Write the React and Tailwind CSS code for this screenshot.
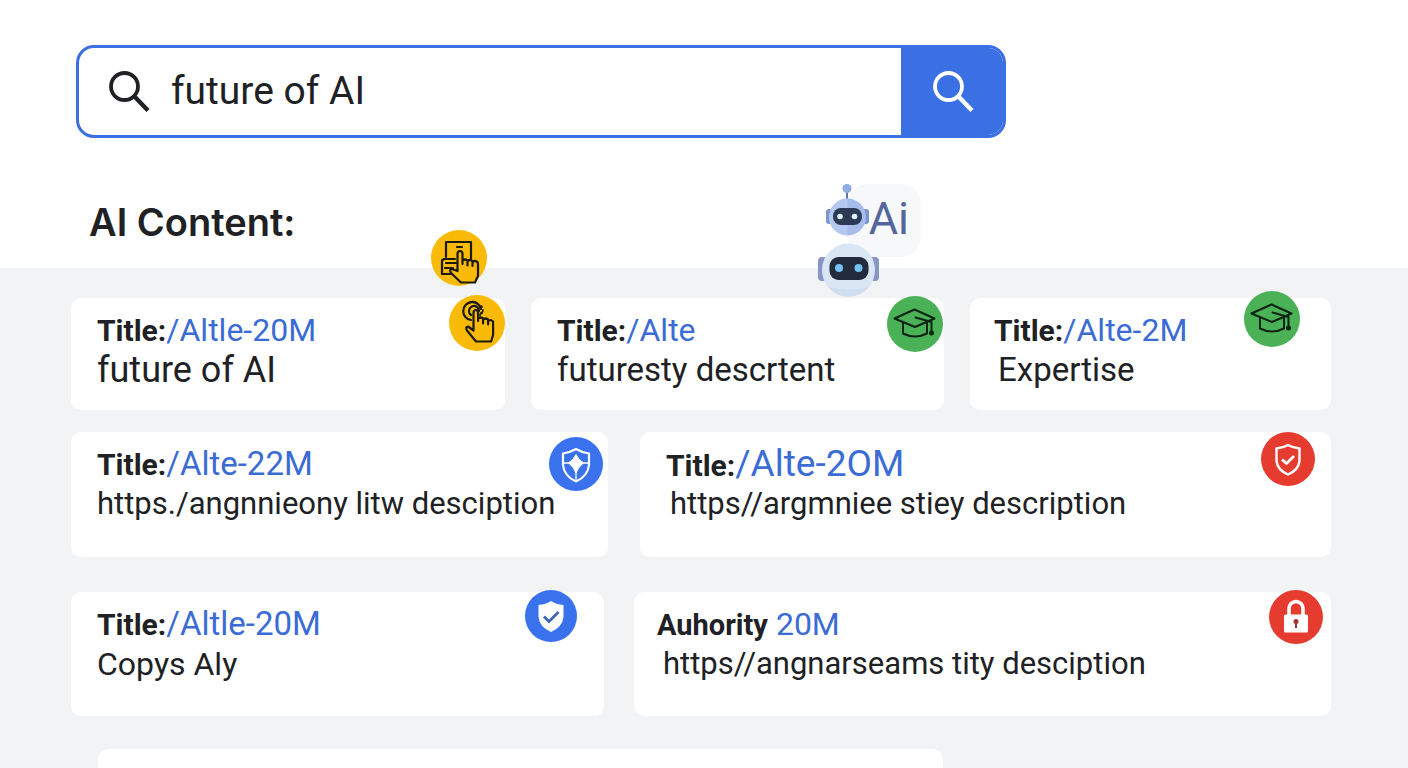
import { useState } from "react";

function SearchIcon({ className }) {
  return (
    <svg viewBox="0 0 42 42" className={className} fill="none" stroke="currentColor">
      <circle cx="15.5" cy="15.5" r="13.5" strokeWidth="3.800" />
      <path d="M25 25 39 39.5" strokeWidth="4.400" />
    </svg>
  );
}

function TabletTapIcon() {
  return (
    <svg viewBox="0 0 56 56" className="size-full" fill="none" stroke="#1c1a10" strokeWidth="2.200" strokeLinejoin="round" strokeLinecap="round">
      <path d="M15 27V12h25v17M26 17h5" />
      <path d="M24 29H13l-2 1.500V44H22M15 33h10M14 38h8" />
      <path
        d="M26.500 39V24q0-3 2.500-3t2.500 3v10V30.500q2.500-2 5 0v5V31q2.500-2 5 0v5V32q2.500-2 5 0L47 34V46l-3 6.500H30L20 43q-2-4 1-4l5.500 2z"
        fill="#f9ba08"
      />
    </svg>
  );
}

function TouchIcon() {
  return (
    <svg viewBox="0 0 56 56" className="size-full" fill="none" stroke="#1c1a10" strokeWidth="2.200" strokeLinejoin="round" strokeLinecap="round">
      <path d="M22 25a9 9 0 1 1 10-11M22 20a5 5 0 1 1 8-4" />
      <path d="M18 9q5-4 10-1M32 11l1 1M34 15l-1 3M31 20l1-2" strokeWidth="1.800" />
      <path
        d="M24.500 35V18q0-3 2.300-3t2.300 3v8V23.500q2.500-2 5 0v5V24.500q2.500-2 5 0v5V25.500q3-1 5 1V40l-2 6.500H27L18 35.500q-2-4 1-4l5.500 4z"
        fill="#f9ba08"
      />
    </svg>
  );
}

function CapIcon() {
  return (
    <svg viewBox="0 0 56 56" className="size-full" fill="none" stroke="#0b2413" strokeWidth="2" strokeLinejoin="round" strokeLinecap="round">
      <path d="M7.500 22.500 27.500 13.500 47.500 22.500 28 31z" />
      <path d="M16 27v10.500q12 6 24 0V27" />
      <path d="M28.500 21.500 44.500 26v10" />
      <circle cx="44.500" cy="37" r="1.500" fill="#0b2413" />
    </svg>
  );
}

function SparkShieldIcon() {
  return (
    <svg viewBox="0 0 54 54" className="size-full" fill="none" stroke="#fff" strokeWidth="2.200" strokeLinejoin="round">
      <path d="M27 12q-6 3.500-13 4.500V28q1 11 13 16.500Q39 39 40 28V16.500Q33 15.500 27 12z" />
      <path d="M14 26h26M27 34v10" strokeWidth="1.300" />
      <path d="M27 17.500q2 5 7.500 8.500Q29 30 27 36 25 30 19.500 26 25 22.500 27 17.500z" fill="#fff" strokeWidth="1" />
    </svg>
  );
}

function CheckShieldIcon() {
  return (
    <svg viewBox="0 0 54 54" className="size-full" fill="none" stroke="#fff" strokeWidth="2.400" strokeLinejoin="round">
      <path d="M27 13q-5 3-11.500 3.500V29q1 9 11.500 13.500Q37.500 38 38.500 29V16.500Q32 16 27 13z" />
      <path d="M21 27.500 25.500 31.500 33 24" strokeWidth="2.800" />
    </svg>
  );
}

function SolidShieldIcon() {
  return (
    <svg viewBox="0 0 52 52" className="size-full">
      <path d="M26 11q-5 3.500-12.500 4v12Q14.500 37 26 42q11.500-5 12.500-15V15Q31 14.500 26 11z" fill="#fff" />
      <path d="M19 26.500 24 31.500 33.500 22" fill="none" stroke="#3e66b8" strokeWidth="2.800" />
    </svg>
  );
}

function LockIcon() {
  return (
    <svg viewBox="0 0 54 54" className="size-full">
      <path d="M20 25v-6.500a7 7 0 0 1 14 0V25" fill="none" stroke="#fff" strokeWidth="3.600" />
      <rect x="15" y="24.500" width="24" height="18" rx="1.500" fill="#fff" />
      <circle cx="27" cy="31.500" r="2.500" fill="#a8322c" />
      <path d="M26 32h2v6h-2z" fill="#a8322c" />
    </svg>
  );
}

function Robots() {
  return (
    <svg viewBox="0 0 62 114" className="h-[114px] w-[62px]">
      <path d="M29 6v10" stroke="#5f74a6" strokeWidth="2" />
      <circle cx="29" cy="5.500" r="4.500" fill="#8fabe0" />
      <rect x="8" y="26" width="8" height="15" rx="3" fill="#7c95cf" />
      <rect x="43" y="26" width="8" height="15" rx="3" fill="#7c95cf" />
      <circle cx="29.500" cy="34" r="18.500" fill="#a6bdeb" />
      <path d="M29.500 15.500a18.500 18.500 0 0 0 0 37z" fill="#b5c9f0" />
      <rect x="15" y="25" width="29" height="17" rx="8" fill="#2c3a55" />
      <circle cx="22" cy="33.500" r="2.800" fill="#e3f1fd" />
      <circle cx="36.500" cy="33.500" r="2.800" fill="#e3f1fd" />
      <rect x="0" y="74" width="10" height="24" rx="4" fill="#8795c6" />
      <rect x="51" y="74" width="10" height="24" rx="4" fill="#8795c6" />
      <circle cx="30.500" cy="87" r="26.500" fill="#dbe6f5" />
      <path d="M10 104a26.500 26.500 0 0 0 41 0q-20 5-41 0z" fill="#d0deef" />
      <rect x="11.500" y="74" width="39" height="23" rx="9" fill="#222c3c" />
      <circle cx="21" cy="85" r="4" fill="#74c2ef" />
      <circle cx="40.500" cy="85" r="4" fill="#74c2ef" />
    </svg>
  );
}

function Badge({ className, children }) {
  return <span className={`absolute block rounded-full ${className}`}>{children}</span>;
}

function ResultCard({
  label = "Title:",
  labelClass = "text-[30px]",
  link,
  linkClass = "text-[32px]",
  text,
  textClass,
  className,
  badgeClass,
  icon,
}) {
  return (
    <article className={`relative rounded-[10px] bg-white ${className}`}>
      <h2 className="h-10 text-[32px] leading-10 whitespace-nowrap">
        <span className={`font-bold ${labelClass}`}>{label}</span>
        <a href="#" className={`text-[#3b6cd6] ${linkClass}`}>
          {link}
        </a>
      </h2>
      <p className={`leading-10 whitespace-nowrap ${textClass}`}>{text}</p>
      <Badge className={badgeClass}>{icon}</Badge>
    </article>
  );
}

function App() {
  const [query, setQuery] = useState("future of AI");

  return (
    <div className="min-h-screen overflow-hidden bg-[#f1f3f5] font-[Roboto,sans-serif] text-[#202124]">
      <header className="relative h-[268px] bg-white pt-[45px] pr-6 pl-[76px]">
        <form
          onSubmit={(e) => e.preventDefault()}
          className="flex h-[93px] w-full max-w-[930px] overflow-hidden rounded-[18px] border-[3px] border-[#3b70e4]"
        >
          <label htmlFor="query" className="flex items-center pr-5 pl-[30px]">
            <SearchIcon className="size-[42px]" />
          </label>
          <input
            id="query"
            type="text"
            value={query}
            onChange={(e) => setQuery(e.target.value)}
            className="min-w-0 flex-1 text-[39px] outline-none"
          />
          <button
            type="submit"
            aria-label="Search"
            className="flex w-[102px] items-center justify-center bg-[#3b70e4] pl-1 text-white"
          >
            <SearchIcon className="size-[42px]" />
          </button>
        </form>
        <h1 className="mt-[60px] pl-[13px] font-[Inter,sans-serif] text-[38px] leading-[48px] font-semibold">
          AI Content:
        </h1>
        <Badge className="top-[230px] left-[431px] size-14 bg-[#f9ba08]">
          <TabletTapIcon />
        </Badge>
        <div className="absolute top-[184px] left-[848px] flex h-[73px] w-[73px] justify-end rounded-[20px] bg-[#f6f8fa] pr-3">
          <span className="text-[45px] leading-[70px] text-[#56669d]">Ai</span>
        </div>
        <div className="absolute top-[183px] left-[818px]">
          <Robots />
        </div>
      </header>

      <main className="pt-[30px] pr-[77px] pl-[71px]">
        <div className="grid grid-cols-[434fr_413fr_361fr] gap-[26px]">
          <ResultCard
            className="h-28 pt-3 pl-[26px]"
            link="/Altle-20M"
            text="future of AI"
            textClass="text-[36px]"
            badgeClass="-top-[3px] right-0 size-14 bg-[#f9ba08]"
            icon={<TouchIcon />}
          />
          <ResultCard
            className="h-28 pt-3 pl-[26px]"
            link="/Alte"
            text="futuresty descrtent"
            textClass="text-[33px]"
            badgeClass="-top-[2px] right-px size-14 bg-[#4bb157]"
            icon={<CapIcon />}
          />
          <ResultCard
            className="h-28 pt-3 pl-6"
            link="/Alte-2M"
            text="Expertise"
            textClass="pl-1 text-[33px]"
            badgeClass="-top-[7px] right-[31px] size-14 bg-[#4bb157]"
            icon={<CapIcon />}
          />
        </div>

        <div className="mt-[22px] grid grid-cols-[537fr_691fr] gap-8">
          <ResultCard
            className="h-[125px] pt-3 pl-[26px]"
            link="/Alte-22M"
            linkClass="text-[33px]"
            text="https./angnnieony litw desciption"
            textClass="text-[31px]"
            badgeClass="top-[5px] right-[5px] size-[54px] bg-[#3a72ee]"
            icon={<SparkShieldIcon />}
          />
          <ResultCard
            className="h-[125px] pt-3 pl-[26px]"
            link="/Alte-2OM"
            linkClass="text-[37px]"
            text="https//argmniee stiey description"
            textClass="pl-1 text-[31px]"
            badgeClass="top-0 right-4 size-[54px] bg-[#e63c2f]"
            icon={<CheckShieldIcon />}
          />
        </div>

        <div className="mt-[35px] grid grid-cols-[533fr_697fr] gap-[30px]">
          <ResultCard
            className="h-[124px] pt-3 pl-[26px]"
            link="/Altle-20M"
            linkClass="text-[33px]"
            text="Copys Aly"
            textClass="text-[32px]"
            badgeClass="-top-[2px] right-[27px] size-[52px] bg-[#3a72ee]"
            icon={<SolidShieldIcon />}
          />
          <ResultCard
            className="h-[124px] pt-3 pl-[23px]"
            label="Auhority"
            labelClass="text-[29px]"
            link="20M"
            linkClass="pl-2 text-[32px]"
            text="https//angnarseams tity desciption"
            textClass="pl-[6px] text-[31px]"
            badgeClass="-top-[2px] right-2 size-[54px] bg-[#e63c2f]"
            icon={<LockIcon />}
          />
        </div>

        <div className="mt-[33px] mr-[388px] ml-[27px] h-[19px] rounded-t-[10px] bg-white" />
      </main>
    </div>
  );
}

export default App;
